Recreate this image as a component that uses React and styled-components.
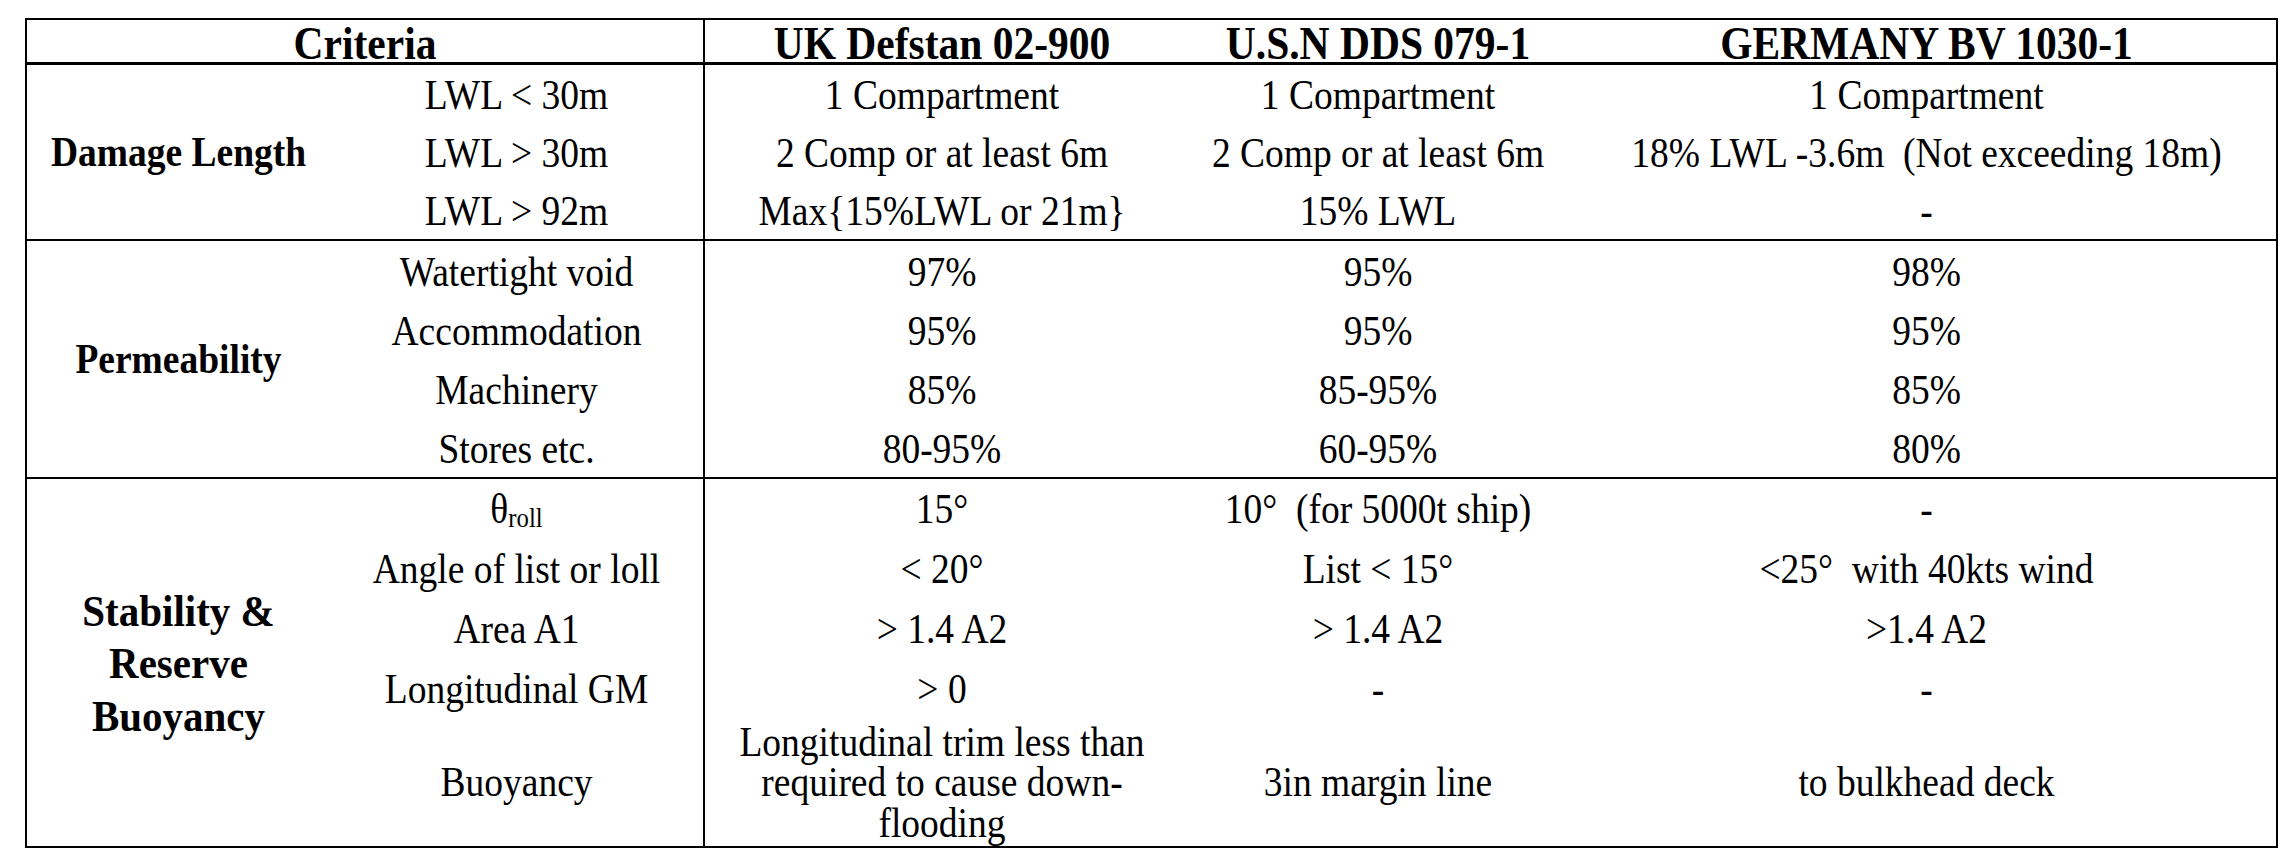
import React from 'react';
import styled, { createGlobalStyle } from 'styled-components';

const Global = createGlobalStyle`
  html, body { margin: 0; padding: 0; background: #fff; }
  body { font-family: "Liberation Serif", "Times New Roman", serif; color: #000; }
`;

const Page = styled.div`
  width: 2293px;
  height: 854px;
  box-sizing: border-box;
  padding: 18px 0 0 25px;
  overflow: hidden;
  background: #fff;
`;

const Table = styled.div`
  width: 2253px;
  box-sizing: border-box;
  border: 2px solid #000;
`;

const HeaderRow = styled.div`
  display: grid;
  grid-template-columns: 678px 474px 398px 699px;
  height: 45px;
  box-sizing: border-box;
  border-bottom: 3px solid #000;
`;

const HeadCell = styled.div`
  display: flex;
  align-items: center;
  justify-content: center;
  box-sizing: border-box;
  font-weight: bold;
  font-size: 41.5px;
  white-space: pre;
  border-right: ${(p) => (p.$divider ? '2px solid #000' : 'none')};
`;

const Section = styled.div`
  display: grid;
  grid-template-columns: 303px 375px 474px 398px 699px;
  grid-template-rows: ${(p) => p.$rows};
  border-bottom: ${(p) => (p.$last ? 'none' : '2px solid #000')};
`;

const Category = styled.div`
  grid-column: 1;
  grid-row: 1 / -1;
  display: flex;
  align-items: center;
  justify-content: center;
  text-align: center;
  font-weight: bold;
  font-size: ${(p) => p.$size}px;
  line-height: 43.6px;
`;

const Cell = styled.div`
  display: flex;
  align-items: center;
  justify-content: center;
  text-align: center;
  box-sizing: border-box;
  padding-top: ${(p) => p.$shift || 0}px;
  font-size: 37.5px;
  white-space: pre;
  border-right: ${(p) => (p.$divider ? '2px solid #000' : 'none')};
`;

const Txt = styled.span`
  display: inline-block;
  transform: scaleY(1.1);
  line-height: ${(p) => (p.$lh ? `${p.$lh}px` : 'normal')};
`;

const Sub = styled.sub`
  font-size: 0.66em;
  vertical-align: -0.12em;
  line-height: 0;
`;

const Theta = () => (
  <>
    θ<Sub>roll</Sub>
  </>
);

const Multi = () => (
  <>
    Longitudinal trim less than
    <br />
    required to cause down-
    <br />
    flooding
  </>
);

const sections = [
  {
    label: ['Damage Length'],
    size: 37.5,
    rows: 'repeat(3, 58px)',
    shift: 3,
    data: [
      ['LWL < 30m', '1 Compartment', '1 Compartment', '1 Compartment'],
      ['LWL > 30m', '2 Comp or at least 6m', '2 Comp or at least 6m', '18% LWL -3.6m  (Not exceeding 18m)'],
      ['LWL > 92m', 'Max{15%LWL or 21m}', '15% LWL', '-'],
    ],
  },
  {
    label: ['Permeability'],
    size: 37.5,
    rows: 'repeat(4, 59px)',
    shift: 3,
    data: [
      ['Watertight void', '97%', '95%', '98%'],
      ['Accommodation', '95%', '95%', '95%'],
      ['Machinery', '85%', '85-95%', '85%'],
      ['Stores etc.', '80-95%', '60-95%', '80%'],
    ],
  },
  {
    label: ['Stability &', 'Reserve', 'Buoyancy'],
    size: 41,
    rows: '60px 60px 60px 60px 127px',
    shift: 0,
    last: true,
    data: [
      [<Theta key="t" />, '15°', '10°  (for 5000t ship)', '-'],
      ['Angle of list or loll', '< 20°', 'List < 15°', '<25°  with 40kts wind'],
      ['Area A1', '> 1.4 A2', '> 1.4 A2', '>1.4 A2'],
      ['Longitudinal GM', '> 0', '-', '-'],
      ['Buoyancy', <Multi key="m" />, '3in margin line', 'to bulkhead deck'],
    ],
  },
];

export default function App() {
  return (
    <Page>
      <Global />
      <Table>
        <HeaderRow>
          <HeadCell $divider><Txt>Criteria</Txt></HeadCell>
          <HeadCell><Txt>UK Defstan 02-900</Txt></HeadCell>
          <HeadCell><Txt>U.S.N DDS 079-1</Txt></HeadCell>
          <HeadCell><Txt>GERMANY BV 1030-1</Txt></HeadCell>
        </HeaderRow>
        {sections.map((s, si) => (
          <Section key={si} $rows={s.rows} $last={s.last}>
            <Category $size={s.size}>
              <Txt>
                {s.label.map((l, i) => (
                  <React.Fragment key={i}>
                    {i > 0 && <br />}
                    {l}
                  </React.Fragment>
                ))}
              </Txt>
            </Category>
            {s.data.map((row, ri) =>
              row.map((c, ci) => (
                <Cell
                  key={`${ri}-${ci}`}
                  $divider={ci === 0}
                  $shift={s.shift}
                  style={{ gridRow: ri + 1, gridColumn: ci + 2 }}
                >
                  <Txt $lh={typeof c === 'object' && c.type === Multi ? 37 : 0}>{c}</Txt>
                </Cell>
              ))
            )}
          </Section>
        ))}
      </Table>
    </Page>
  );
}
